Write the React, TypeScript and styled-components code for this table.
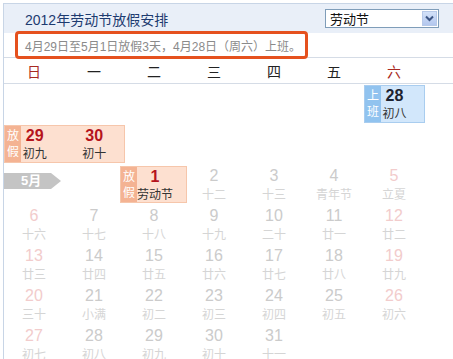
import React from 'react'
import styled, { createGlobalStyle } from 'styled-components'

const GlobalStyle = createGlobalStyle`
    body{
        margin:0;
        overflow:hidden;
        background:#fff;
        font-family:"Liberation Sans","Noto Sans CJK SC",sans-serif;
    }
`

const Panel = styled.div`
    margin: 3px 0 0 3px;
    width: 470px;
    border-left: 1px solid #c8d5e6;
    border-top: 1px solid #c8d5e6;
`

const Header = styled.div`
    height: 29px;
    background-color: #e9eff8;
    display: flex;
    align-items: center;
    padding: 0 35px 0 21px;
`

const Title = styled.h1`
    margin: 0;
    font-size: 14px;
    font-weight: 400;
    color: #1d3b70;
    font-family: "Liberation Sans","Noto Sans CJK SC",sans-serif;
`

const Select = styled.div`
    margin-left: auto;
    width: 114px;
    height: 19px;
    box-sizing: border-box;
    border: 1px solid #7f9db9;
    background: #fff;
    display: flex;
    align-items: center;
    justify-content: space-between;
    padding: 0 1px 0 4px;
    font-size: 13px;
    color: #111;
`

const SelectButton = styled.span`
    width: 15px;
    height: 15px;
    box-sizing: border-box;
    border: 1px solid #b7c9e8;
    background: linear-gradient(#d3e1f8, #b3c7ee);
    display: flex;
    align-items: center;
    justify-content: center;
`

const SubRow = styled.div`
    height: 24px;
    border-bottom: 1px solid #d5dce6;
    display: flex;
    align-items: center;
    padding-left: 11px;
`

const Notice = styled.div`
    height: 28px;
    box-sizing: border-box;
    border: 3px solid #e5511e;
    border-radius: 4px;
    padding: 0 4px 0 7px;
    display: flex;
    align-items: center;
    font-size: 12px;
    color: #8a8a8a;
`

const WeekRow = styled.div`
    height: 25px;
    border-bottom: 1px solid #d5dce6;
    display: grid;
    grid-template-columns: repeat(7, 60px);
    align-items: center;
`

const WeekDay = styled.span<{ $weekend?: boolean }>`
    text-align: center;
    font-size: 14px;
    color: ${p => (p.$weekend ? '#a82a22' : '#222')};
`

const Body = styled.div`
    display: grid;
    grid-template-columns: repeat(7, 60px);
    grid-template-rows: repeat(7, 40px);
`

const Cell = styled.div<{ $col: number; $row: number }>`
    grid-column: ${p => p.$col};
    grid-row: ${p => p.$row};
    display: flex;
    flex-direction: column;
    align-items: center;
    padding-top: 2px;
`

const Num = styled.span<{ $weekend?: boolean }>`
    font-size: 16px;
    line-height: 20px;
    color: ${p => (p.$weekend ? '#f2cccc' : '#cbcbcb')};
`

const Lunar = styled.span`
    margin-top: 1px;
    font-size: 12px;
    line-height: 16px;
    color: #d5d5d5;
`

const Block = styled.div<{ $col: number; $row: number; $span: number; $kind: 'off' | 'work'; $shift?: number }>`
    grid-column: ${p => p.$col} / span ${p => p.$span};
    grid-row: ${p => p.$row};
    position: relative;
    align-self: start;
    margin: ${p => (p.$shift ? '2px 0 0 -4px' : '1px 0 0 0')};
    width: ${p => p.$span * 60 + (p.$shift ? 7 : 1)}px;
    height: ${p => (p.$shift ? 37 : 38)}px;
    box-sizing: border-box;
    padding-left: ${p => (p.$shift ? 4 : 0)}px;
    display: flex;
    background-color: ${p => (p.$kind === 'off' ? '#fde0d0' : '#d2e7fb')};
    border: 1px solid ${p => (p.$kind === 'off' ? '#f6c6ab' : '#a9cdef')};
`

const Tag = styled.span<{ $kind: 'off' | 'work' }>`
    position: absolute;
    left: 0;
    top: 0;
    bottom: 0;
    width: 16px;
    display: flex;
    flex-direction: column;
    align-items: center;
    justify-content: center;
    font-size: 12px;
    line-height: 16px;
    color: #fff;
    background-color: ${p => (p.$kind === 'off' ? '#f4b393' : '#91c3ef')};
`

const BlockDay = styled.div`
    width: 60px;
    display: flex;
    flex-direction: column;
    align-items: center;
`

const BlockNum = styled.span<{ $red?: boolean }>`
    font-size: 16px;
    line-height: 20px;
    font-weight: 700;
    color: ${p => (p.$red ? '#b5141c' : '#1d2330')};
`

const BlockLunar = styled.span`
    font-size: 12px;
    line-height: 16px;
    color: #333;
`

const MonthTag = styled.div`
    grid-column: 1 / span 2;
    grid-row: 3;
    align-self: start;
    margin-top: 9px;
    width: 57px;
    height: 16px;
    background-color: #c4c4c4;
    clip-path: polygon(0 0, 47px 0, 57px 50%, 47px 100%, 0 100%);
    color: #fff;
    font-size: 13px;
    font-weight: 700;
    line-height: 16px;
    padding-left: 17px;
    box-sizing: border-box;
`

type Day = { n: number; lunar: string; col: number; row: number }

const plainDays: Day[] = [
    { n: 2, lunar: '十二', col: 4, row: 3 },
    { n: 3, lunar: '十三', col: 5, row: 3 },
    { n: 4, lunar: '青年节', col: 6, row: 3 },
    { n: 5, lunar: '立夏', col: 7, row: 3 },
]

const lunars = [
    ['十六', '十七', '十八', '十九', '二十', '廿一', '廿二'],
    ['廿三', '廿四', '廿五', '廿六', '廿七', '廿八', '廿九'],
    ['三十', '小满', '初二', '初三', '初四', '初五', '初六'],
    ['初七', '初八', '初九', '初十', '十一'],
]

lunars.forEach((week, w) => {
    week.forEach((lunar, i) => {
        plainDays.push({ n: 6 + w * 7 + i, lunar, col: i + 1, row: 4 + w })
    })
})

const weekDays = ['日', '一', '二', '三', '四', '五', '六']

const App = () => {
  return (
    <>
    <GlobalStyle />
    <Panel>
        <Header>
            <Title>2012年劳动节放假安排</Title>
            <Select>
                劳动节
                <SelectButton>
                    <svg width="9" height="7" viewBox="0 0 9 7">
                        <path d="M1 1.5 L4.5 5 L8 1.5" fill="none" stroke="#3d5684" strokeWidth="2" />
                    </svg>
                </SelectButton>
            </Select>
        </Header>
        <SubRow>
            <Notice>4月29日至5月1日放假3天，4月28日（周六）上班。</Notice>
        </SubRow>
        <WeekRow>
            {weekDays.map((d, i) => (
                <WeekDay key={d} $weekend={i === 0 || i === 6}>{d}</WeekDay>
            ))}
        </WeekRow>
        <Body>
            <Block $col={7} $row={1} $span={1} $kind="work">
                <Tag $kind="work"><span>上</span><span>班</span></Tag>
                <BlockDay>
                    <BlockNum>28</BlockNum>
                    <BlockLunar>初八</BlockLunar>
                </BlockDay>
            </Block>
            <Block $col={1} $row={2} $span={2} $kind="off">
                <Tag $kind="off"><span>放</span><span>假</span></Tag>
                <BlockDay>
                    <BlockNum $red>29</BlockNum>
                    <BlockLunar>初九</BlockLunar>
                </BlockDay>
                <BlockDay>
                    <BlockNum $red>30</BlockNum>
                    <BlockLunar>初十</BlockLunar>
                </BlockDay>
            </Block>
            <MonthTag>5月</MonthTag>
            <Block $col={3} $row={3} $span={1} $kind="off" $shift={4}>
                <Tag $kind="off"><span>放</span><span>假</span></Tag>
                <BlockDay>
                    <BlockNum $red>1</BlockNum>
                    <BlockLunar>劳动节</BlockLunar>
                </BlockDay>
            </Block>
            {plainDays.map(d => (
                <Cell key={d.n} $col={d.col} $row={d.row}>
                    <Num $weekend={d.col === 1 || d.col === 7}>{d.n}</Num>
                    <Lunar>{d.lunar}</Lunar>
                </Cell>
            ))}
        </Body>
    </Panel>
    </>
  )
}

export default App
